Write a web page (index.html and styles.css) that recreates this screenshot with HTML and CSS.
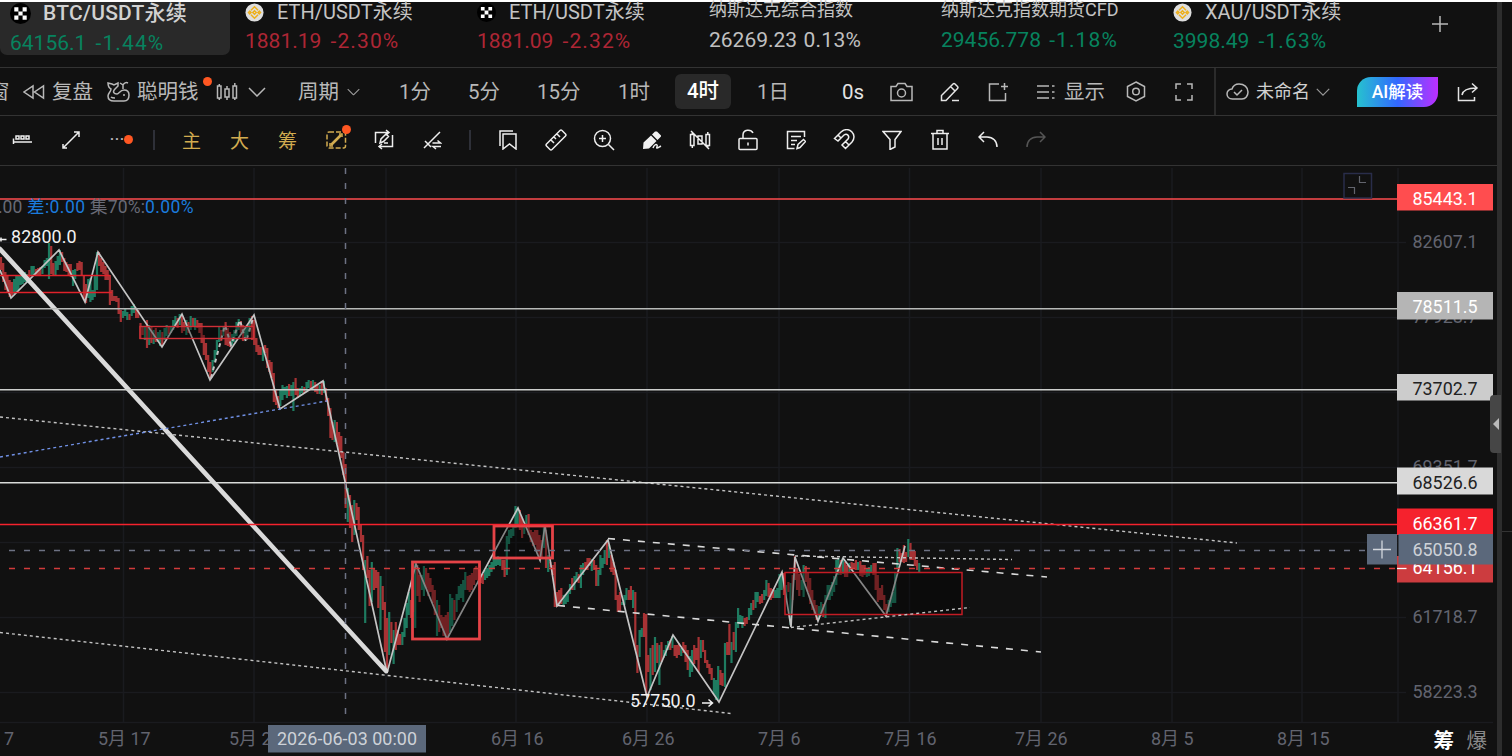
FILE: index.html
```html
<!DOCTYPE html>
<html lang="zh-CN">

<head>
    <meta charset="UTF-8">
    <meta name="viewport" content="width=device-width, initial-scale=1.0">
    <title>BTC/USDT永续</title>
    <link rel="stylesheet" href="styles.css">
</head>

<body>
    <svg class="defs" width="0" height="0">
        <symbol id="okx" viewBox="0 0 22 22">
            <circle cx="11" cy="11" r="11" fill="#000" />
            <path d="M4.5 4.5h4.3v4.3H4.5zM13.2 4.5h4.3v4.3h-4.3zM8.8 8.8h4.4v4.4H8.8zM4.5 13.2h4.3v4.3H4.5zM13.2 13.2h4.3v4.3h-4.3z" fill="#fff" />
        </symbol>
        <symbol id="bnb" viewBox="0 0 20 20">
            <circle cx="10" cy="10" r="9.5" fill="#dedede" />
            <path d="M6.3 7.6L10 4l3.7 3.6M6.3 12.4L10 16l3.7-3.6M5 8.6L3.7 10 5 11.4 6.3 10zM15 8.6L13.7 10l1.3 1.4 1.3-1.4zM10 8.2L8.2 10l1.8 1.8 1.8-1.8z" fill="none" stroke="#eeb01c" stroke-width="1.6" />
        </symbol>
        <symbol id="chevron" viewBox="0 0 18 10">
            <path d="M1 1l8 8 8-8" />
        </symbol>
    </svg>

    <div class="app">
        <main class="main">
            <header class="tickers">
                <div class="ticker active down">
                    <div class="name"><svg class="logo"><use href="#okx" /></svg>BTC/USDT永续</div>
                    <div class="price">64156.1 <span>-1.44%</span></div>
                </div>
                <div class="ticker up">
                    <div class="name"><svg class="logo"><use href="#bnb" /></svg>ETH/USDT永续</div>
                    <div class="price">1881.19 <span>-2.30%</span></div>
                </div>
                <div class="ticker up">
                    <div class="name"><svg class="logo"><use href="#okx" /></svg>ETH/USDT永续</div>
                    <div class="price">1881.09 <span>-2.32%</span></div>
                </div>
                <div class="ticker index flat">
                    <div class="name">纳斯达克综合指数</div>
                    <div class="price">26269.23 <span>0.13%</span></div>
                </div>
                <div class="ticker index down">
                    <div class="name">纳斯达克指数期货CFD</div>
                    <div class="price">29456.778 <span>-1.18%</span></div>
                </div>
                <div class="ticker down">
                    <div class="name"><svg class="logo"><use href="#bnb" /></svg>XAU/USDT永续</div>
                    <div class="price">3998.49 <span>-1.63%</span></div>
                </div>
                <svg class="add" width="16" height="16" viewBox="0 0 16 16"><path d="M8 0v16M0 8h16" /></svg>
            </header>

            <nav class="toolbar">
                <span class="cut">窗</span>
                <svg width="22" height="16" viewBox="0 0 22 16"><path d="M10 2v12L1 8zM20.500 2v12l-9-6z" /></svg>
                <span>复盘</span>
                <svg width="24" height="22" viewBox="0 0 24 22"><path d="M1 2l4 1 2 1 4-2v3L8 8c-3 3-1 5 2 5 2 0 3-4 7-4 3 0 5 2 5 5 0 4-2 6-5 6H7c-4 0-6-2-6-5 0-3 3-4 3-7C2 7 1 5 1 2zM16 8V4l-3-2M16 4c1-2 3-3 5-2M17 13v2M4 16c1 1 2 1 4 1" /></svg>
                <span class="smart">聪明钱<i class="dot"></i></span>
                <svg width="22" height="20" viewBox="0 0 22 20"><path d="M1.500 4h3.500v12H1.500zM9 7h4v8H9zM17 4h3.500v12H17zM3.300 2v2M3.300 16v2M11 4v3M11 15v3M18.800 1v3M18.800 16v2" /></svg>
                <svg width="18" height="10"><use href="#chevron" /></svg>
                <span>周期</span>
                <svg class="thin-icon" width="13" height="8" viewBox="0 0 18 10"><use href="#chevron" /></svg>
                <span>1分</span>
                <span>5分</span>
                <span>15分</span>
                <span>1时</span>
                <span class="selected">4时</span>
                <span>1日</span>
                <span class="bright">0s</span>
                <svg width="23" height="20" viewBox="0 0 23 20"><path d="M1 4.500h5L8 1.500h7l2 3h5v14H1z" /><circle cx="11.500" cy="11" r="4" /></svg>
                <svg class="bright" width="20" height="20" viewBox="0 0 20 20"><path d="M1.500 18.500v-5L13 2q1-1 2 0l2.500 2.500q1 1 0 2L6 18.500zM10.500 4.500l4.500 4.500M12 18.500h7" /></svg>
                <svg width="21" height="20" viewBox="0 0 21 20"><path d="M11 2H1.500v16.500h16V11M16.500 1v7M13 4.500h7" /></svg>
                <svg width="20" height="16" viewBox="0 0 20 16"><path d="M1 2h12M1 8h12M1 14h12M16 2h2.500M16 8h2.500M16 14h2.500" /></svg>
                <span>显示</span>
                <svg width="20" height="21" viewBox="0 0 20 21"><path d="M10 1l8.500 4.500v10L10 20l-8.500-4.500v-10z" /><circle cx="10" cy="10.500" r="3.300" /></svg>
                <svg width="18" height="18" viewBox="0 0 18 18"><path d="M1 6V1h5M12 1h5v5M17 12v5h-5M6 17H1v-5" /></svg>
                <i class="rule"></i>
                <svg width="23" height="18" viewBox="0 0 23 18"><path d="M6.500 16C3 16 1 13.500 1 11s2-5 5-5c1-3 3.500-5 7-5 5 0 9 3 9 8 0 4-2.500 7-6 7zM8 9l3 3 5-5" /></svg>
                <span class="layout">未命名</span>
                <svg class="thin-icon" width="14" height="8" viewBox="0 0 18 10"><use href="#chevron" /></svg>
                <span class="ai">AI解读</span>
                <svg class="bright" width="22" height="20" viewBox="0 0 22 20"><path d="M1.500 5v13.500h16V15M5 13c1-5 5-7 14-7M15 1.500L20 6l-5 4.500" /></svg>
            </nav>

            <nav class="drawbar">
                <svg width="22" height="20" viewBox="0 0 22 20"><path d="M1.500 14V8.500M1 12h19M4 6h3v3H4zM9 6h3v3H9zM14 6h3v3h-3z" /></svg>
                <svg width="20" height="20" viewBox="0 0 20 20"><path d="M2 18L18 2M13 2h5v5M2 14v4h4" /></svg>
                <span class="more">···<i class="dot"></i></span>
                <i class="split"></i>
                <b>主</b>
                <b>大</b>
                <b>筹</b>
                <span class="gold"><svg width="21" height="18" viewBox="0 0 21 18"><rect x="1" y="1" width="18.500" height="16" rx="2" stroke-dasharray="5 2" /><path d="M5 14l10-10" stroke-width="2.600" /><path d="M4 12v3h3M13 3h3v3" /></svg><i class="dot"></i></span>
                <svg width="20" height="22" viewBox="0 0 20 22"><path d="M1.500 14V3.500h13M12 1l3 2.500-3 2.500M18.500 6v11.500H5M8 15l-3 2.500L8 20M6 14l1-4 5-5 2.500 2.500-5 5zM10 14h4" /></svg>
                <svg width="20" height="20" viewBox="0 0 20 20"><path d="M2 18L18 2M3 11l6 6M10.500 13h8l-3-2.500M19 16.500h-8l3 2.500" /></svg>
                <i class="split wide"></i>
                <svg width="20" height="20" viewBox="0 0 20 20"><path d="M5 4h13v15l-6.500-5L5 19zM2 16V1h13" /></svg>
                <svg width="22" height="22" viewBox="0 0 22 22"><path d="M1.500 15L15 1.500q1-1 2 0L20.500 5q1 1 0 2L7 20.500q-1 1-2 0L1.500 17q-1-1 0-2zM6 11l3 3M9 8l2 2M12 5l3 3" /></svg>
                <svg width="22" height="22" viewBox="0 0 22 22"><circle cx="9.500" cy="9.500" r="8" /><path d="M15.500 15.500l5.500 5.500M9.500 6v7M6 9.500h7" /></svg>
                <svg width="20" height="20" viewBox="0 0 20 20"><path d="M1 19l.5-6.500L9 5.500l5.500 5.500L7 18.500zM10 4.500L13 1.500h2L19 5.500v1L15.500 10z" fill="#f0f0f0" stroke="none" /><path d="M11 18c1-3 3-4 4-3s-1 3 0 3 2-1 4-2" /></svg>
                <svg width="22" height="20" viewBox="0 0 22 20"><path d="M1.500 4.500H5v11H1.500zM9 6h4v8H9zM17 4.500h3.500v11H17zM3.300 2v2.500M3.300 15.500V18M18.800 2v2.500M18.800 15.500V18M2 1l18 18" /></svg>
                <svg width="20" height="22" viewBox="0 0 20 22"><rect x="1" y="9.500" width="18" height="11" rx="1" /><path d="M5 9V6c0-6 8-6 10-2M10 13.500v3" /></svg>
                <svg width="20" height="20" viewBox="0 0 20 20"><path d="M18.500 7V1.500H1.500v17h7M5 6.500h10M5 10.500h6M5 14.500h4M11 18.500l1-4 5.500-5 2 2-5.500 6z" /></svg>
                <svg width="22" height="22" viewBox="0 0 22 22"><path d="M1.500 9.500L8 3c8-7 17 3 11 10l-6.500 6.500-3.500-3.500 6-6c2-3-1-6-4-4l-6 6zM5 6l3.500 3.500M12.500 12.500L16 16" /></svg>
                <svg width="20" height="20" viewBox="0 0 20 20"><path d="M1 1.500h18l-6 8V17l-5 2.500v-10z" /></svg>
                <svg width="20" height="22" viewBox="0 0 20 22"><path d="M1 4.500h18M3 4.500v15.500h14V4.500M7 4V1.500h6V4M8 9v7M12 9v7" /></svg>
                <svg width="20" height="20" viewBox="0 0 20 20"><path d="M6 2L1 7l5 5M1 7h8c6 0 10 4 10 10" /></svg>
                <svg class="off" width="20" height="20" viewBox="0 0 20 20"><path d="M14 2l5 5-5 5M19 7h-8C5 7 1 11 1 17" /></svg>
            </nav>

            <section class="chart">
                <svg class="plot" viewBox="0 166 1497 590" width="1497" height="590">
                    <g class="grid">
                        <path d="M123.500 168V722M254 168V722M386 168V722M516 168V722M647 168V722M779 168V722M909.500 168V722M1041 168V722M1172 168V722M1302 168V722M1398 168V722" />
                        <path d="M0 242.500H1406M0 317.500H1398M0 392.500H1398M0 467.500H1398M0 542.500H1398M0 617.500H1406M0 692.500H1406M0 722.500H1493" />
                    </g>

                    <g class="axis">
                        <text x="1412.500" y="248">82607.1</text>
                        <text x="1412.500" y="323">77928.7</text>
                        <text x="1412.500" y="473">69351.7</text>
                        <text x="1412.500" y="623">61718.7</text>
                        <text x="1412.500" y="698">58223.3</text>
                        <text x="4" y="745">7</text>
                        <text x="98" y="745">5月 17</text>
                        <text x="229" y="745">5月 27</text>
                        <text x="491" y="745">6月 16</text>
                        <text x="622" y="745">6月 26</text>
                        <text x="758" y="745">7月 6</text>
                        <text x="884" y="745">7月 16</text>
                        <text x="1015" y="745">7月 26</text>
                        <text x="1151" y="745">8月 5</text>
                        <text x="1277" y="745">8月 15</text>
                    </g>

                    <path class="candle rise" id="rise" />
                    <path class="candle fall" id="fall" />

                    <path class="zigzag" d="M0 270L11 298 59 250 85 302 98 252 162 347 182 314 210 380 254 315 280 409 323 381 387 673 416 564 447 639 518 508 540 560 545 525 557 606 608 540 647 697 673 635 719 702 782 572 791 627 795 557 818 621 843 558 886 616 905 546" />
                    <path class="zigzag inner" d="M211 378L225 325 231 345 240 320 246 342 253 318" />

                    <path class="level red" d="M0 275.500H110M0 292.500H112" />
                    <rect class="zone pale" x="140" y="326.500" width="113.500" height="12" />
                    <rect class="zone strong" x="412.500" y="562" width="67" height="77" />
                    <rect class="zone strong" x="494" y="526" width="58.500" height="32" />
                    <rect class="zone thin" x="785" y="572.500" width="177" height="42" />

                    <path class="trend" d="M0 249L386 671" />
                    <path class="dots" d="M0 417L1237 543M0 632.500L731 713.500M795 556L1012 559.500M791 627.500L970 607.500" />
                    <path class="dots blue" d="M0 457L327 401" />
                    <path class="dashes" d="M608 538.500L1047 577M558 605.500L1041 652" />

                    <path class="level" d="M0 199H1398" stroke="#ff4d4f" />
                    <path class="level" d="M0 308.800H1398" stroke="#b8bab8" />
                    <path class="level" d="M0 389.700H1398" stroke="#cdcfcd" />
                    <path class="level" d="M0 482.800H1398" stroke="#d9dbd9" />
                    <path class="level" d="M0 524.500H1398" stroke="#f5222d" />
                    <path class="last" d="M-6 568.500H1396" />
                    <path class="cross" d="M-6 550.500H1367M345.500 168V716" />

                    <g class="legend">
                        <text class="muted" x="-2" y="213">.00</text>
                        <text x="27" y="213" textLength="58">差:0.00</text>
                        <text class="muted" x="90" y="213" textLength="55">集70%:</text>
                        <text x="145" y="213" textLength="48.500">0.00%</text>
                    </g>
                    <g class="extreme">
                        <text x="11" y="243" textLength="65.500">82800.0</text>
                        <path d="M0 239.500H6.500M1 237.500v4" />
                        <text x="630" y="707" textLength="65.500">57750.0</text>
                        <path d="M702 703H712M708.500 699.500l4 3.500-4 3.500" />
                    </g>

                    <g class="restore">
                        <rect x="1344" y="173.500" width="27.500" height="24.500" />
                        <path d="M1348 187.500h6.500v6.500M1359.500 176v6.500h6.500" />
                    </g>

                    <g class="tags">
                        <rect x="1397" y="184" width="96" height="26.500" fill="#ff4d4f" />
                        <text x="1412.500" y="204.500">85443.1</text>
                        <rect x="1397" y="292" width="96" height="27.500" fill="#b5b5b5" />
                        <text x="1412.500" y="313">78511.5</text>
                        <rect x="1397" y="374" width="96" height="26.500" fill="#cccccc" />
                        <text class="dark" x="1412.500" y="394.500">73702.7</text>
                        <rect x="1397" y="467.500" width="96" height="27" fill="#d9d9d9" />
                        <text class="dark" x="1412.500" y="488.500">68526.6</text>
                        <rect x="1397" y="556" width="96" height="26.500" fill="#cc3c3f" />
                        <text x="1412.500" y="574">64156.1</text>
                        <path d="M1397 568.500h9.500" stroke="#fff" stroke-width="1.300" />
                        <rect x="1397" y="508.500" width="96" height="26.500" fill="#f5222d" />
                        <text x="1412.500" y="529.500">66361.7</text>
                        <rect x="1367" y="534" width="30" height="30.500" fill="#5b687b" />
                        <path d="M1373 549.500h18M1382 540.500v18" stroke="#d3d7dd" stroke-width="1.300" />
                        <rect x="1398.500" y="534" width="94.500" height="30.500" fill="#5b687b" />
                        <text class="soft" x="1412.500" y="555.500">65050.8</text>
                        <rect x="268" y="725" width="158" height="27.500" fill="#5b687b" />
                        <text class="soft" x="277" y="745" textLength="140">2026-06-03 00:00</text>
                    </g>
                    <text class="mode on" x="1433.500" y="748">筹</text>
                    <text class="mode" x="1466.500" y="748">爆</text>
                </svg>
            </section>
        </main>
        <aside class="side">
            <div class="handle"></div>
        </aside>
    </div>

    <script src="chart.js"></script>
</body>

</html>
```

FILE: styles.css
```css
* {
    box-sizing: border-box;
}

body {
    margin: 0;
    background: #111;
    color: #b8b8b8;
    font-family: Roboto, "Noto Sans CJK SC", sans-serif;
    overflow: hidden;
}

.defs {
    position: absolute;
}

.app {
    display: flex;
    width: 1512px;
    height: 756px;
    border-top: 2px solid #fff;
}

.main {
    display: flex;
    flex-direction: column;
    width: 1497px;
}

svg {
    flex: none;
    fill: none;
    stroke: currentColor;
    stroke-width: 1.5;
}

/* 行情栏 */
.tickers {
    display: flex;
    height: 66px;
    border-bottom: 1px solid #333;
}

.ticker {
    width: 232px;
    height: 53px;
    padding-left: 13px;
    font-size: 21px;
    white-space: nowrap;
}

.ticker.active {
    width: 230px;
    margin-right: 2px;
    padding-left: 10px;
    background: #292929;
    border-radius: 0 0 7px 7px;
}

.ticker .name {
    display: flex;
    align-items: center;
    height: 22px;
    font-size: 20px;
    line-height: 20px;
    margin-top: -1px;
    color: #c4c4c4;
}

.ticker.active .name {
    height: 24px;
    margin-top: -1px;
    font-size: 21px;
    font-weight: 500;
    letter-spacing: 0.2px;
    color: #d2d2d2;
}

.ticker.index {
    padding-left: 13px;
}

.ticker.index .name {
    height: 18px;
    font-size: 18px;
}

.ticker .logo {
    width: 19px;
    height: 19px;
    margin-right: 13px;
    stroke: none;
}

.ticker.active .logo {
    width: 21px;
    height: 21px;
    margin-right: 12px;
}

.ticker .price {
    height: 32px;
    line-height: 36px;
}

.ticker.index .price {
    line-height: 42px;
}

.price span {
    margin-left: 4px;
    letter-spacing: 1.1px;
}

.index .price span {
    margin-left: 3px;
}

.flat .price span {
    margin-left: 1px;
    letter-spacing: 0.3px;
}

.down .price {
    color: #07835f;
}

.up .price {
    color: #ad2635;
}

.flat .price {
    color: #c0c0c0;
}

.add {
    margin: 14px 0 0 40px;
}

/* 工具栏 */
.toolbar {
    display: grid;
    grid-template-columns: 23px 29px 55px 30px 79px 32px 50px 49px 52px 69px 69px 81px 57px 82px 85px 48px 50px 48px 48px 28px 62px 49px 39px 12px 30px 60px 41px 100px 40px;
    align-items: center;
    height: 48px;
    border-bottom: 1px solid #333;
    font-size: 20.5px;
    line-height: 32px;
    white-space: nowrap;
}

.toolbar .cut {
    margin-left: -11px;
}

.thin-icon {
    color: #999;
}

.smart {
    position: relative;
}

.dot {
    position: absolute;
    width: 9px;
    height: 9px;
    border-radius: 50%;
    background: #ff5722;
}

.smart .dot {
    left: 66px;
    top: 1px;
}

.selected {
    width: 56px;
    height: 35px;
    border-radius: 6px;
    background: #292929;
    color: #fff;
    line-height: 35px;
    text-align: center;
    font-weight: 500;
}

.bright {
    color: #e4e4e4;
}

.rule {
    width: 2px;
    height: 47px;
    background: #2b2b2b;
}

.layout {
    font-size: 18px;
    color: #d0d0d0;
}

.ai {
    width: 81px;
    height: 30px;
    border-radius: 14px 0;
    background: linear-gradient(90deg, #26c2cf, #3268ff 50%, #bd2eff);
    color: #fff;
    font-size: 17.5px;
    font-weight: 500;
    line-height: 30px;
    text-align: center;
}

/* 画线工具 */
.drawbar {
    display: flex;
    align-items: center;
    height: 50px;
    margin-left: -1px;
    padding-bottom: 2px;
    border-bottom: 1px solid #333;
    color: #eee;
}

.drawbar > svg {
    margin: 0 calc((48px - 20px) / 2);
}

.drawbar > svg[width="22"] {
    margin: 0 13px;
}

.drawbar b,
.gold,
.more {
    position: relative;
    display: flex;
    justify-content: center;
    width: 48px;
    color: #d2ac50;
    font-size: 19px;
    font-weight: 400;
}

.drawbar b {
    padding-right: 1px;
}

.more {
    color: #bbb;
    padding-right: 4px;
}

.more .dot {
    left: 29px;
    top: 7px;
}

.gold .dot {
    left: 30px;
    top: -6px;
}

.split {
    flex: none;
    width: 25px;
    height: 20px;
    background: linear-gradient(#2e3038, #2e3038) 10px 0 / 2px 20px no-repeat;
}

.split.wide {
    width: 28px;
    background-position-x: 13px;
}

.off {
    color: #555;
}

/* 图表 */
.chart {
    height: 590px;
}

.plot {
    display: block;
}

.plot text {
    stroke: none;
    font-size: 17.9px;
}

.grid {
    stroke: #1a1b1f;
    stroke-width: 1.6;
}

.axis text {
    fill: #62646f;
}

.candle {
    stroke-width: 2.2;
}

.rise {
    stroke: #1e7b60;
}

.fall {
    stroke: #a63234;
}

.zigzag {
    stroke: #c4c4c4;
    stroke-width: 1.7;
}

.inner {
    stroke-dasharray: 4 4;
    stroke-width: 2;
}

.level {
    stroke-width: 1.4;
}

.red {
    stroke: #e0222b;
}

.zone {
    fill: rgba(0, 0, 0, 0.32);
}

.pale {
    stroke: #cf3037;
    stroke-width: 1.4;
}

.strong {
    stroke: #e54347;
    stroke-width: 2.8;
}

.thin {
    stroke: #c31c25;
    stroke-width: 1.5;
}

.trend {
    stroke: #dadada;
    stroke-width: 4.6;
    stroke-linecap: round;
}

.dots {
    stroke: #c4c4c4;
    stroke-width: 1.4;
    stroke-dasharray: 3 3;
}

.dots.blue {
    stroke: #7090e4;
}

.dashes {
    stroke: #dadada;
    stroke-width: 1.6;
    stroke-dasharray: 7 8;
}

.last {
    stroke: #d13b3b;
    stroke-width: 1.4;
    stroke-dasharray: 6 9;
}

.cross {
    stroke: #6d7283;
    stroke-width: 1.5;
    stroke-dasharray: 6 9;
}

.plot .legend text {
    fill: #1b7bdc;
    font-size: 17.5px;
}

.plot .legend .muted {
    fill: #686a75;
}

.extreme {
    stroke: #f2f2f2;
}

.extreme text {
    fill: #f2f2f2;
}

.restore rect {
    stroke: #292d4a;
}

.restore path {
    stroke: #62646d;
    stroke-width: 1.2;
}

.tags {
    fill: #fff;
}

.tags rect {
    stroke: none;
}

.tags .dark {
    fill: #222;
}

.tags .soft {
    fill: #ced2d8;
}

.plot .mode {
    fill: #8a8a8a;
    font-size: 20.5px;
}

.plot .mode.on {
    fill: #fff;
    font-weight: 700;
}

/* 右侧边栏 */
.side {
    position: relative;
    width: 15px;
    border-left: 5px solid #2d2d2d;
    background: linear-gradient(#333, #333) 0 529px / 10px 1px no-repeat;
}

.handle {
    position: absolute;
    left: -12px;
    top: 393px;
    width: 11px;
    height: 58px;
    border-radius: 4px 0 0 4px;
    background: #464646;
}

.handle::after {
    content: "";
    position: absolute;
    left: 3px;
    top: 23px;
    border: 6px solid transparent;
    border-left: 0;
    border-right-color: #bbb;
}
```

FILE: chart.js
```js
// 4小时K线：每段从 x 开始，r/g 为跌/涨，后接最高与最低的纵坐标
const STEP = 2.18;
const segments = [
    [1, 'r257-270 r263-282 r272-290 r276-293 r280-297 r282-296 g279-294 g275-292 g276-290 g275-285 g273-284 g272-282 g274-283 r270-280 g266-276 g266-276 r269-276 r268-275 r267-275 g266-274 g260-268 g258-266'],
    [49, 'g243-279 r246-274 r263-275 g261-275 g256-270 g250-265 r252-262 r258-271 r262-272 r264-275 r264-277 g270-286 g269-279 r263-271 r261-270 r262-276 r276-300 r284-303 g279-298 g278-302 g290-300 g276-297 g252-290'],
    [99, 'r252-266 r258-272 r262-274 r266-280 r270-280 r275-305 r290-301 r296-301 r296-302 r298-314 r310-322 g311-318 g309-316 g312-320 r314-320 g306-316 g304-313 r309-318 r310-318'],
    [140.5, 'r323-339 r327-335 g326-340 r320-348 g325-345 r326-343 g330-344 r328-342 g332-342 g330-346 r332-345 g328-340 g325-336 r326-334 g326-333 g320-330 g316-326 r318-328 g314-325'],
    [182, 'r316-333 r322-331 g320-335 r322-333 g316-330 r318-326 g318-330 r320-328 r323-333 r323-343 r335-355 r343-360 r355-372 r362-378 g360-372 g350-362 g340-355 g326-342 r330-341 g326-336 r322-345 r328-346 r332-347 g334-345 g330-342 g322-336 g319-330 r321-333 r325-341 g328-340 g325-336 g318-332'],
    [252, 'r316-340 r320-345 r338-352 r345-355 r347-355 g348-361 r345-353 r348-368 r360-372 r362-378 r373-402 r390-405 r396-408 g390-406 g385-400 g387-395 g386-398 r384-396 g385-396 g382-411 r378-395 r388-398 g388-396 g386-393 r387-393 g382-392 g380-388 r381-389 g380-390 r382-392 r385-394 g385-394 r381-395 g381-393'],
    [326, 'r388-402 r398-416 r408-438 r422-440 g420-442 r422-444 r432-453 r436-458 r452-475 r464-508 g488-522 r495-528 r505-542 g500-535 r503-520 r507-530 r524-542 r535-570 g560-623 r556-578 r570-606 g562-602 r568-590 r570-588 r572-608 g576-630 r586-610 r602-652 r618-672 g612-655 r622-643 g630-664 r622-650 r630-645 r634-645 g632-645 g618-637 g603-628 g592-615 r600-618 r590-612'],
    [415.2, 'g563-628 r565-596 r575-602 g575-590 g566-596 r568-588 r573-596 r578-592 r585-603 r590-615 g600-636 r605-632 r615-628 r617-636 r615-639 r612-638 g594-632 g598-626 r600-620 g594-612 g586-600 g584-598 g580-602 g572-590 r576-590 r575-592 r573-590 r568-585 r566-580 r568-584 r575-583 r574-584 g570-580 g568-578 g565-576 g562-572 g556-568 g557-566 g556-565 g558-566 r560-570 r560-577'],
    [506.8, 'g536-575 g530-544 g529-538 g524-536 g506-528 g508-524 r510-530 r518-538 g526-534 g515-527 r514-535 r530-542 r532-546 r530-545 r530-552 r535-558 r540-558 g526-548 r530-568 g555-572 r562-567 r565-575 r562-607 r592-607 r590-605 r588-604 g595-605 g594-604 g592-602 g584-594 r578-590 g576-590 g572-582 r574-583 g565-588 g563-575 r562-570 r558-570 r558-566 g559-571 r560-570 r565-586'],
    [598.2, 'g570-586 g555-575 g558-568 g550-564 r540-565 g545-558 r555-572 r562-575 r570-600 r595-612 r592-612 g602-605 g595-605 g588-600 r590-600 r586-600 g590-608 r592-650 r645-673 g630-657 g628-637 r613-637 r614-695 r655-672 g648-690 r645-675'],
    [655, 'g637-672 r643-663 g645-685 r642-662 g650-658 g645-656 g641-650 r640-650 g636-648 r645-656 r645-658 r643-655 g648-656 r642-653 r645-662 r650-670 g656-677 g650-672 r645-664 r648-660 r637-672 g640-658 r640-652 r650-663 r660-668 r664-674 r668-680 g678-694 g680-700 g666-700 r670-685 r673-686'],
    [725, 'g643-687 r642-655 r624-655 g642-663 r632-650 g622-652 g608-628 g615-624 g616-628 r618-626 r617-624 g608-620 g603-615 r600-610 g592-608 g592-602 r596-604 r594-603 g590-600 g580-596 r583-597 r588-600 r589-598 g590-598 g588-598 g574-598 g574-590'],
    [784, 'r573-595 g585-600 r582-592 g583-625 r575-600 r556-580 r568-590 r574-596 g580-590 g565-597 r566-582 r572-592 r578-604 r590-610 r600-615 r605-620 g606-619 g602-616 r604-617 g595-618 g585-600 g585-600 g582-596 g576-592 g560-585 g558-575 r560-575 g558-574 r562-577 r565-577 g563-572 r562-570 r563-569 r560-570 g562-570 r561-576 r565-577 r565-575 g568-577 g567-576 g565-572'],
    [873.4, 'r563-575 r563-590 r575-602 r588-600 r585-600 r595-610 r604-617 g600-612 g598-607 g592-603 g572-603 g548-568 r549-562 r553-562 r545-563 r552-562 g539-557 r543-560 r551-560 r551-566 r560-570 g563-572'],
];

const paths = { r: '', g: '' };
segments.forEach(([start, bars]) => {
    bars.split(' ').forEach((bar, i) => {
        const [high, low] = bar.slice(1).split('-');
        paths[bar[0]] += `M${(start + i * STEP).toFixed(1)} ${high}V${low}`;
    });
});

document.getElementById('rise').setAttribute('d', paths.g);
document.getElementById('fall').setAttribute('d', paths.r);
```
